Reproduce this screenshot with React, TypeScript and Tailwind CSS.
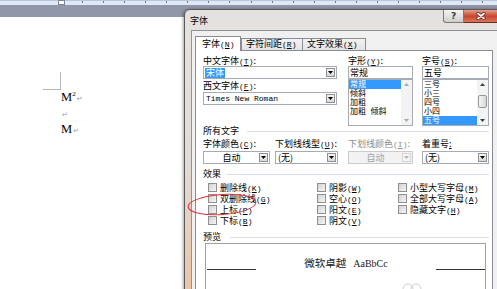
import type { ReactNode } from 'react';

// 键盘快捷键 (T) 之类
const Acc = ({ k }: { k: string }) => (
  <span className="font-['Liberation_Mono',monospace] text-[8px] leading-[6px]">
    (<span className="underline">{k}</span>)
  </span>
);

const Down = ({ c = '#000' }: { c?: string }) => (
  <svg width="5" height="3" viewBox="0 0 5 3" className="block">
    <path d="M0 0H5L2.5 3Z" fill={c} />
  </svg>
);

const Up = ({ c = '#000' }: { c?: string }) => (
  <svg width="5" height="3" viewBox="0 0 5 3" className="block">
    <path d="M0 3H5L2.5 0Z" fill={c} />
  </svg>
);

const Ret = () => (
  <span className="ml-[1px] font-['DejaVu_Sans',sans-serif] text-[7px] text-[#9a9a9a]">↵</span>
);

const Label = ({ children, className = '' }: { children: ReactNode; className?: string }) => (
  <div className={`h-[10px] whitespace-nowrap leading-[10px] ${className}`}>{children}</div>
);

const Section = ({ title, gap }: { title: string; gap: string }) => (
  <div className="flex h-[10px] items-center">
    <span className="whitespace-nowrap leading-[10px]">{title}</span>
    <div className={`h-[1px] flex-1 bg-[#d6dee8] ${gap}`} />
  </div>
);

function Combo({
  children,
  disabled = false,
  center = false,
  className = '',
}: {
  children: ReactNode;
  disabled?: boolean;
  center?: boolean;
  className?: string;
}) {
  return (
    <div
      className={`flex h-[13px] border ${
        disabled ? 'border-[#cbcbcb] bg-[#f2f2f2] text-[#a3a3a3]' : 'border-[#a5acb5] bg-white'
      } ${className}`}
    >
      <div className={`flex flex-1 items-center overflow-hidden pl-[1px] leading-[10px] ${center ? 'justify-center' : ''}`}>
        {children}
      </div>
      <div
        className={`m-[1px] flex w-[9px] items-center justify-center border ${
          disabled ? 'border-[#d6d6d6] bg-[#f4f4f4]' : 'border-[#8e8f8f] bg-linear-to-b from-[#f6f6f6] to-[#d8d8d8]'
        }`}
      >
        <Down c={disabled ? '#b8b8b8' : '#000'} />
      </div>
    </div>
  );
}

const TextBox = ({ children }: { children: ReactNode }) => (
  <div className="h-[13px] border border-[#a5acb5] bg-white pl-[1px] leading-[11px]">{children}</div>
);

function ListBox({ items, sel, thumb = false }: { items: string[]; sel: string; thumb?: boolean }) {
  return (
    <div className="flex h-[47px] border border-[#a5acb5] bg-white">
      <div className="flex-1 font-['Liberation_Sans','Noto_Sans_CJK_SC',sans-serif] text-[8px]">
        {items.map((i) => (
          <div
            key={i}
            className={`h-[9px] whitespace-pre pl-[1px] leading-[9px] ${i === sel ? 'bg-[#3399ff] text-white' : ''}`}
          >
            {i}
          </div>
        ))}
      </div>
      <div className="flex w-[11px] flex-col bg-[#f3f3f3]">
        <div className="flex h-[9px] items-center justify-center">
          <Up c={thumb ? '#3e3e3e' : '#a8a8a8'} />
        </div>
        {thumb && (
          <div className="mx-auto mt-[6px] h-[13px] w-[9px] rounded-[2px] border border-[#979797] bg-linear-to-r from-[#f4f4f4] to-[#d9d9d9]" />
        )}
        <div className="mt-auto flex h-[9px] items-center justify-center">
          <Down c={thumb ? '#3e3e3e' : '#a8a8a8'} />
        </div>
      </div>
    </div>
  );
}

const Check = ({ label, k }: { label: string; k: string }) => (
  <div className="flex h-[11px] items-center">
    <div className="h-[9px] w-[9px] shrink-0 border border-[#8f8f8f] bg-linear-to-br from-[#d3d3d3] to-[#f5f5f5]" />
    <span className="ml-[3px] h-[10px] whitespace-nowrap pt-[1px] font-['Liberation_Sans','Noto_Sans_CJK_SC',sans-serif] leading-[9px]">
      {label}
      <Acc k={k} />
    </span>
  </div>
);

function Ruler() {
  const ticks = Array.from({ length: 20 }, (_, i) => Math.round(82 + i * 21.07));
  return (
    <svg width="497" height="5" className="block">
      <rect width="497" height="5" fill="#dfe8f4" />
      <rect width="497" height="1" fill="#b7c8de" />
      {ticks.map((x) => (
        <rect key={x} x={x} y="1" width="1" height="2" fill="#6f7d91" />
      ))}
      <rect x="58.5" y="0.5" width="6" height="4" fill="#fff" stroke="#7b8595" />
    </svg>
  );
}

function FontDialog() {
  return (
    <div className="absolute left-[184px] top-[9px] flex h-[300px] w-[322px] flex-col rounded-t-[6px] border border-[#5a5a5a] bg-linear-to-b from-[#e4e2e0] via-[#e2dcd6] to-[#ebc19f] font-['Noto_Sans_CJK_SC','Noto_Sans',sans-serif] text-[9px] text-black shadow-[-1px_0_3px_rgba(0,0,0,0.35)]">
      {/* 标题栏 */}
      <div className="flex h-[20px] shrink-0 items-start pl-[5px]">
        <span className="mt-[6px] leading-[10px]">字体</span>
        <div className="ml-auto mr-[6px] flex">
          <div className="flex h-[13px] w-[21px] items-center justify-center rounded-bl-[3px] border border-t-0 border-[#7a7a7a] bg-linear-to-b from-[#f5f5f5] to-[#cfcfcf] font-['DejaVu_Sans',sans-serif] text-[9px] font-bold leading-none text-[#3a3a3a]">
            ?
          </div>
          <div className="flex h-[13px] w-[35px] items-center justify-center rounded-br-[3px] border border-l-0 border-t-0 border-[#6b2a20] bg-linear-to-b from-[#e6a08d] via-[#c6442e] to-[#d9765c]">
            <svg width="10" height="8" viewBox="0 0 10 8">
              <path d="M2 1.5L8 6.5M8 1.5L2 6.5" stroke="#5a1d12" strokeWidth="3.2" strokeLinecap="round" />
              <path d="M2 1.5L8 6.5M8 1.5L2 6.5" stroke="#fff" strokeWidth="1.8" strokeLinecap="round" />
            </svg>
          </div>
        </div>
      </div>

      {/* 客户区 */}
      <div className="ml-[6px] w-[308px] flex-1 border border-[#8e939b] bg-[#f0f0f0] pl-[3px] pt-[5px]">
        <div className="relative z-10 -mb-[1px] flex h-[15px] items-end">
          <div className="h-[15px] w-[46px] border border-b-0 border-[#898c95] bg-white pl-[6px] pt-[2px] leading-[10px]">
            字体
            <Acc k="N" />
          </div>
          <div className="h-[13px] w-[62px] border border-[#898c95] bg-linear-to-b from-[#f3f3f3] to-[#e3e3e3] pl-[4px] leading-[10px]">
            字符间距
            <Acc k="R" />
          </div>
          <div className="-ml-[1px] h-[13px] w-[64px] border border-[#898c95] bg-linear-to-b from-[#f3f3f3] to-[#e3e3e3] pl-[4px] leading-[10px]">
            文字效果
            <Acc k="X" />
          </div>
        </div>

        <div className="relative h-[250px] w-[298px] border border-[#898c95] bg-white pl-[7px] pt-[5px]">
          <div className="w-[286px]">
            <div className="flex">
              <div className="w-[134px]">
                <Label>
                  中文字体
                  <Acc k="T" />:
                </Label>
                <Combo>
                  <span className="bg-[#3399ff] px-[1px] text-white">宋体</span>
                </Combo>
                <Label className="mt-[2px]">
                  西文字体
                  <Acc k="F" />:
                </Label>
                <Combo className="mt-[1px]">
                  <span className="pl-[1px] font-['Liberation_Mono',monospace] text-[8px]">Times New Roman</span>
                </Combo>
              </div>
              <div className="ml-[11px] w-[65px]">
                <Label>
                  字形
                  <Acc k="Y" />:
                </Label>
                <TextBox>常规</TextBox>
                <ListBox items={['常规', '倾斜', '加粗', '加粗  倾斜']} sel="常规" />
              </div>
              <div className="ml-[9px] w-[67px]">
                <Label>
                  字号
                  <Acc k="S" />:
                </Label>
                <TextBox>五号</TextBox>
                <ListBox items={['三号', '小三', '四号', '小四', '五号']} sel="五号" thumb />
              </div>
            </div>

            <Section title="所有文字" gap="ml-[8px]" />
            <div className="mt-[3px] flex">
              <Label className="w-[72px]">
                字体颜色
                <Acc k="C" />:
              </Label>
              <Label className="w-[73px]">
                下划线线型
                <Acc k="U" />:
              </Label>
              <Label className="w-[74px] text-[#8d8d8d]">
                下划线颜色
                <Acc k="I" />:
              </Label>
              <Label>
                着重号<span className="underline">:</span>
              </Label>
            </div>
            <div className="mt-[2px] flex">
              <Combo center className="w-[67px]">
                自动
              </Combo>
              <Combo className="ml-[5px] w-[63px]">
                <span className="pl-[1px]">(无)</span>
              </Combo>
              <Combo disabled center className="ml-[10px] w-[65px]">
                自动
              </Combo>
              <Combo className="ml-[9px] w-[67px]">
                <span className="pl-[1px]">(无)</span>
              </Combo>
            </div>

            <div className="mt-[5px]">
              <Section title="效果" gap="ml-[5px]" />
            </div>
            <div className="mt-[3px] flex pl-[5px]">
              <div className="w-[109px]">
                <Check label="删除线" k="K" />
                <Check label="双删除线" k="G" />
                <Check label="上标" k="P" />
                <Check label="下标" k="B" />
              </div>
              <div className="w-[81px]">
                <Check label="阴影" k="W" />
                <Check label="空心" k="O" />
                <Check label="阳文" k="E" />
                <Check label="阴文" k="V" />
              </div>
              <div>
                <Check label="小型大写字母" k="M" />
                <Check label="全部大写字母" k="A" />
                <Check label="隐藏文字" k="H" />
              </div>
            </div>

            <div className="mt-[6px]">
              <Section title="预览" gap="ml-[9px]" />
            </div>
            <div className="ml-[2px] mt-[1px] h-[60px] w-[281px] border border-[#a0a0a0] bg-white pt-[14px]">
              <div className="flex h-[12px] items-end">
                <div className="ml-[1px] h-[1px] w-[49px] bg-[#333]" />
                <div className="flex-1 whitespace-nowrap text-center leading-[12px] text-[#222]">
                  <span className="text-[10.5px]">微软卓越</span>
                  <span className="ml-[7px] font-['Liberation_Serif',serif] text-[10px]">AaBbCc</span>
                </div>
                <div className="h-[1px] w-[49px] bg-[#333]" />
              </div>
            </div>
          </div>
        </div>
      </div>
    </div>
  );
}

export default function App() {
  return (
    <div className="relative h-[289px] w-[497px] overflow-hidden bg-white">
      <Ruler />
      <div className="h-[12px] bg-[#9097a8]" />
      <div className="pl-[43px] pt-[55px]">
        <div className="h-[18px] w-[18px] border-b border-r border-[#b5b5b5]" />
        <div className="-mt-[1px] ml-[18px] font-['Liberation_Serif',serif] text-[12.5px] leading-[16px] text-black">
          <div className="h-[16px]">
            M<span className="align-super text-[7px] leading-none">2</span>
            <Ret />
          </div>
          <div className="h-[16px]">
            <Ret />
          </div>
          <div className="h-[16px]">
            M<Ret />
          </div>
        </div>
      </div>

      <FontDialog />

      {/* 红色标注圈 */}
      <svg width="76" height="30" viewBox="0 0 76 30" className="absolute left-[184px] top-[190px]">
        <ellipse cx="38" cy="14.5" rx="34" ry="10" fill="none" stroke="#e3303a" strokeWidth="1" transform="rotate(-4 38 14.5)" />
      </svg>
      <svg width="24" height="12" viewBox="0 0 24 12" className="absolute left-[400px] top-[280px]">
        <circle cx="8" cy="9" r="5" fill="none" stroke="#cdcdcd" />
        <circle cx="16" cy="9" r="5" fill="none" stroke="#cdcdcd" />
      </svg>
    </div>
  );
}
